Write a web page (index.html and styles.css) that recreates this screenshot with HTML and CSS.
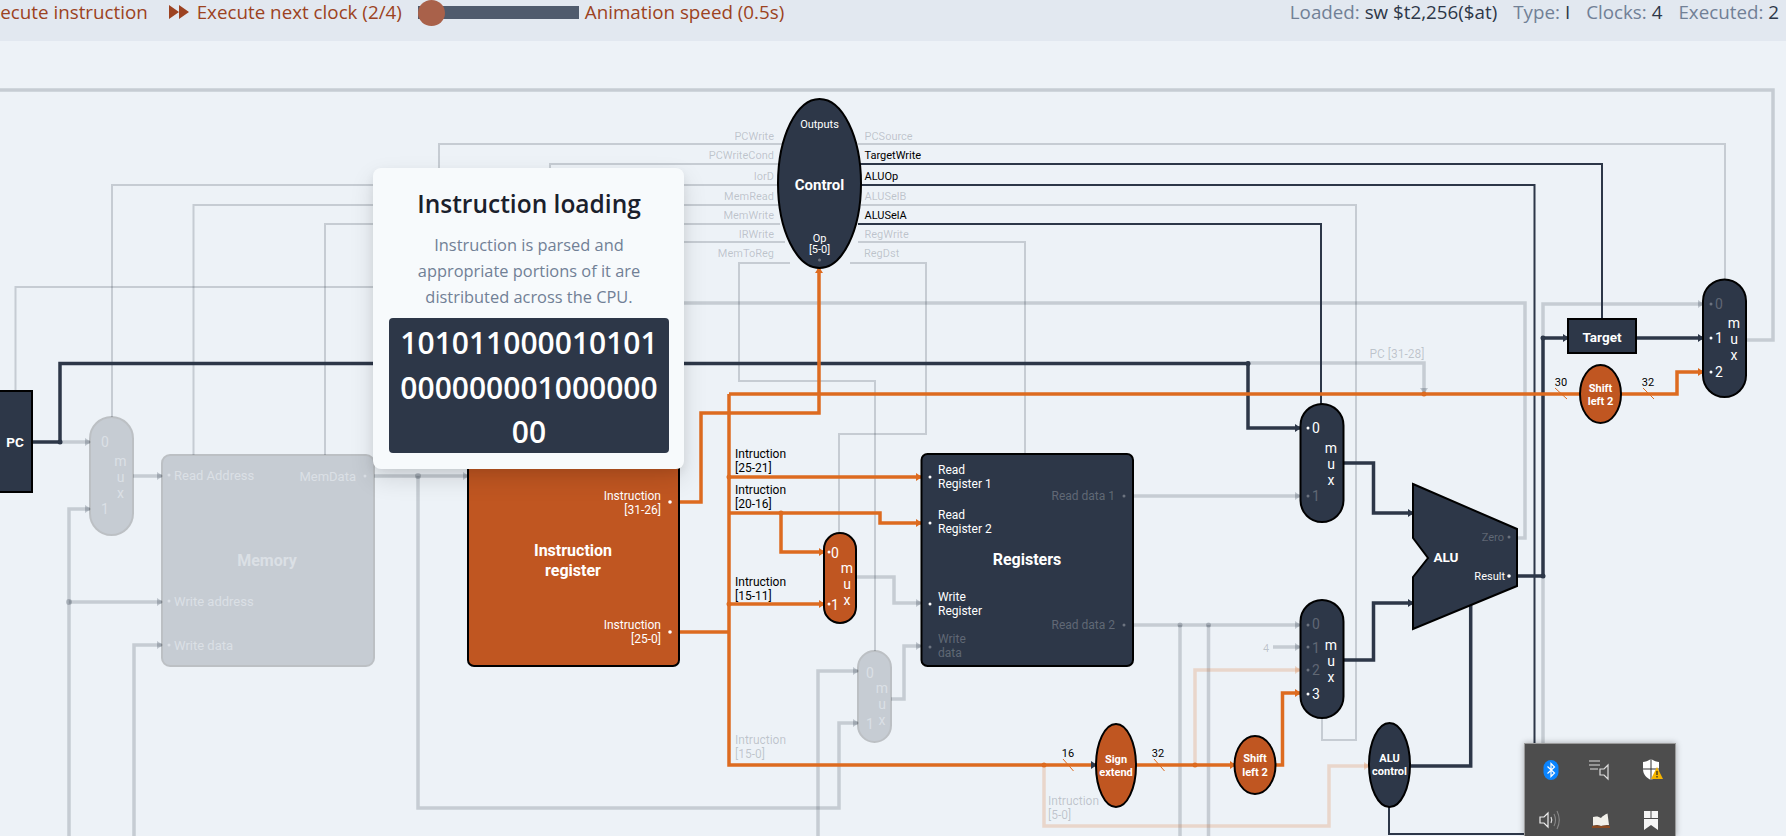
FILE: index.html
```html
<!DOCTYPE html>
<html lang="en">

<head>
    <meta charset="UTF-8">
    <title>MIPS CPU</title>
    <link rel="stylesheet" href="styles.css">
</head>

<body>
    <header class="topbar">
        <div class="controls">
            <span class="control-btn control-first">Execute instruction</span>
            <span class="control-btn">
                <svg class="ff-icon" width="20" height="14" viewBox="0 0 20 14"><path d="M0 0l10 7-10 7zM10 0l10 7-10 7z" /></svg>
                Execute next clock (2/4)
            </span>
            <span class="slider"><span class="slider-thumb"></span></span>
            <span class="control-btn speed">Animation speed (0.5s)</span>
        </div>
        <div class="stats">
            <span>Loaded: <b>sw $t2,256($at)</b></span>
            <span>Type: <b>I</b></span>
            <span>Clocks: <b>4</b></span>
            <span>Executed: <b>2</b></span>
        </div>
    </header>

    <main class="stage">
        <svg class="diagram" width="1786" height="795" viewBox="0 41 1786 795">
            <defs>
                <marker id="a-off" markerUnits="userSpaceOnUse" markerWidth="6" markerHeight="8" refX="5" refY="4" orient="auto"><path class="head-off" d="M0 0l6 4-6 4z" /></marker>
                <marker id="a-dark" markerUnits="userSpaceOnUse" markerWidth="6" markerHeight="8" refX="5" refY="4" orient="auto"><path class="head-dark" d="M0 0l6 4-6 4z" /></marker>
                <marker id="a-org" markerUnits="userSpaceOnUse" markerWidth="6" markerHeight="8" refX="5" refY="4" orient="auto"><path class="head-org" d="M0 0l6 4-6 4z" /></marker>
                <marker id="a-pale" markerUnits="userSpaceOnUse" markerWidth="6" markerHeight="8" refX="5" refY="4" orient="auto"><path class="head-pale" d="M0 0l6 4-6 4z" /></marker>
            </defs>

            <!-- inactive wires -->
            <g class="wire off">
                <path d="M0 90H1773V340H1746" />
                <path d="M69 836V509H90" marker-end="url(#a-off)" />
                <path d="M69 602H162" marker-end="url(#a-off)" />
                <path d="M134 836V645H162" marker-end="url(#a-off)" />
                <path d="M60 442H90" marker-end="url(#a-off)" />
                <path d="M133 476H162" marker-end="url(#a-off)" />
                <path d="M374 476H468" marker-end="url(#a-off)" />
                <path d="M418 476V808H839V723H858" marker-end="url(#a-off)" />
                <path d="M818 836V671H858" marker-end="url(#a-off)" />
                <path d="M856 577H894V603H921" marker-end="url(#a-off)" />
                <path d="M891 699H904V646H921" marker-end="url(#a-off)" />
                <path d="M1133 496H1300" marker-end="url(#a-off)" />
                <path d="M1133 625H1300" marker-end="url(#a-off)" />
                <path d="M1273 647H1300" marker-end="url(#a-off)" />
                <path d="M1180 625V836" />
                <path d="M1208.5 625V836" />
                <path d="M1248 363H1424V393" marker-end="url(#a-off)" />
                <path d="M1543 338V304H1703" marker-end="url(#a-off)" />
                <path d="M1543 576V836" />
                <path d="M500 303H1525V538H1517" />
                <path class="thin" d="M15.5 391V287H500" />
                <path class="thin" d="M785 144H439V170" />
                <path class="thin" d="M785 164H550V170" />
                <path class="thin" d="M782 185H112V417" />
                <path class="thin" d="M780 205H193.5V455" />
                <path class="thin" d="M780 224H325V455" />
                <path class="thin" d="M785 242H600" />
                <path class="thin" d="M790 263H739V381H875V651" />
                <path class="thin" d="M858 144H1725V279" />
                <path class="thin" d="M861 205H1356V740H1322V718" />
                <path class="thin" d="M858 242H1025V454" />
                <path class="thin" d="M850 263H926V434H839V533" />
            </g>

            <!-- faded orange wires -->
            <g class="wire pale">
                <path d="M1044 765V826H1329V766H1369" marker-end="url(#a-pale)" />
                <path d="M1195 765V670H1300" marker-end="url(#a-pale)" />
            </g>

            <!-- active control and data wires -->
            <g class="wire dark">
                <path d="M32 442H60V363.5H1248V428H1300" marker-end="url(#a-dark)" />
                <path d="M1344 463H1373.5V513H1413" marker-end="url(#a-dark)" />
                <path d="M1344 660H1373.5V603H1413" marker-end="url(#a-dark)" />
                <path d="M1517 576H1543V338H1568" marker-end="url(#a-dark)" />
                <path d="M1636 338H1703" marker-end="url(#a-dark)" />
                <path d="M1410 766H1470.7V604" />
                <path class="thin" d="M855 164H1602V319" />
                <path class="thin" d="M858 185H1534.5V836" />
                <path class="thin" d="M858 224H1321V404" />
                <path class="thin" d="M1389 807V834H1534" />
            </g>

            <g class="wire org">
                <path d="M680 502H701V413H819V268" marker-end="url(#a-org)" />
                <path d="M680 632H729" />
                <path d="M729 394V765H1096" marker-end="url(#a-dark)" />
                <path d="M729 394H1677V372H1703" marker-end="url(#a-org)" />
                <path d="M729 477H921" marker-end="url(#a-org)" />
                <path d="M729 513H880V523H921" marker-end="url(#a-org)" />
                <path d="M781 513V552H824" marker-end="url(#a-org)" />
                <path d="M729 604H824" marker-end="url(#a-org)" />
                <path d="M1136 765H1235" marker-end="url(#a-org)" />
                <path d="M1275 765H1282.5V693H1300" marker-end="url(#a-org)" />
            </g>

            <g class="slashes">
                <path d="M1063 759l10.5 12M1154 759l10.5 12M1555 388l12 11M1643 388l11 11" />
            </g>

            <g class="joints">
                <circle class="j-dark" cx="60" cy="442" r="2.5" />
                <circle class="j-dark" cx="1248" cy="363.5" r="2.5" />
                <circle class="j-dark" cx="1543" cy="338" r="2.5" />
                <circle class="j-dark" cx="1543" cy="576" r="2.5" />
                <circle class="j-org" cx="781" cy="513" r="2.5" />
                <circle class="j-org" cx="729" cy="477" r="2.5" />
                <circle class="j-org" cx="729" cy="604" r="2.5" />
                <circle class="j-org" cx="1195" cy="765" r="2.5" />
                <circle class="j-org" cx="1044" cy="765" r="2.5" />
                <circle class="j-org" cx="1424" cy="394" r="2.5" />
                <circle class="j-off" cx="418" cy="476" r="3" />
                <circle class="j-off" cx="69" cy="602" r="3" />
                <circle class="j-off" cx="1180" cy="625" r="2.5" />
                <circle class="j-off" cx="1208.5" cy="625" r="2.5" />
            </g>

            <!-- faded blocks -->
            <g class="faded">
                <rect class="block" x="162" y="455" width="212" height="211" rx="8" />
                <text class="lbl-w big" x="174" y="480">Read Address</text>
                <text class="lbl-w big end" x="356" y="481">MemData</text>
                <text class="lbl-w big" x="174" y="606">Write address</text>
                <text class="lbl-w big" x="174" y="650">Write data</text>
                <text class="title-w mid" x="267" y="566">Memory</text>
                <circle class="pin" cx="169" cy="475" r="1.5" />
                <circle class="pin" cx="169" cy="601" r="1.5" />
                <circle class="pin" cx="169" cy="645" r="1.5" />
                <circle class="pin" cx="365" cy="476" r="1.5" />
            </g>
            <g class="faded">
                <rect class="block" x="90" y="417" width="43" height="118" rx="21.5" />
                <text class="mux-t" x="101" y="447">0</text>
                <text class="mux-t" x="101" y="514">1</text>
                <text class="mux-t mid" x="120.5" y="466">m</text>
                <text class="mux-t mid" x="120.5" y="482">u</text>
                <text class="mux-t mid" x="120.5" y="498">x</text>
            </g>
            <g class="faded">
                <rect class="block" x="858" y="651" width="33" height="91" rx="16.5" />
                <text class="mux-t" x="866" y="678">0</text>
                <text class="mux-t" x="866" y="729">1</text>
                <text class="mux-t mid" x="882" y="693">m</text>
                <text class="mux-t mid" x="882" y="709">u</text>
                <text class="mux-t mid" x="882" y="725">x</text>
            </g>

            <!-- PC -->
            <rect class="block" x="-4" y="391" width="36" height="101" />
            <text class="title-s mid" x="15" y="447">PC</text>

            <!-- control unit -->
            <ellipse class="block" cx="819.5" cy="183.5" rx="41.5" ry="84.5" />
            <text class="lbl-w mid" x="819.5" y="128">Outputs</text>
            <text class="title-c mid" x="819.5" y="190">Control</text>
            <text class="lbl-w mid" x="819.5" y="242">Op</text>
            <text class="lbl-w mid" x="819.5" y="253">[5-0]</text>
            <circle class="pin dim" cx="819.5" cy="260" r="1.5" />
            <g class="lbl-off end">
                <text x="774" y="140">PCWrite</text>
                <text x="774" y="159">PCWriteCond</text>
                <text x="774" y="180">IorD</text>
                <text x="774" y="200">MemRead</text>
                <text x="774" y="219">MemWrite</text>
                <text x="774" y="238">IRWrite</text>
                <text x="774" y="257">MemToReg</text>
            </g>
            <g class="lbl-off">
                <text x="864.5" y="140">PCSource</text>
                <text x="864.5" y="200">ALUSelB</text>
                <text x="864.5" y="238">RegWrite</text>
                <text x="864" y="257">RegDst</text>
            </g>
            <g class="lbl-on">
                <text x="864.5" y="159">TargetWrite</text>
                <text x="864.5" y="180">ALUOp</text>
                <text x="864.5" y="219">ALUSelA</text>
            </g>

            <!-- instruction register -->
            <rect class="block hot" x="468" y="440" width="211" height="226" rx="6" />
            <text class="title-w mid" x="573" y="556">Instruction</text>
            <text class="title-w mid" x="573" y="576">register</text>
            <g class="lbl-w med end">
                <text x="661" y="500">Instruction</text>
                <text x="661" y="514">[31-26]</text>
                <text x="661" y="629">Instruction</text>
                <text x="661" y="643">[25-0]</text>
            </g>
            <circle class="pin" cx="670" cy="502" r="1.8" />
            <circle class="pin" cx="670" cy="632" r="1.8" />

            <g class="lbl-on med">
                <text x="735" y="458">Intruction</text>
                <text x="735" y="472">[25-21]</text>
                <text x="735" y="494">Intruction</text>
                <text x="735" y="508">[20-16]</text>
                <text x="735" y="586">Intruction</text>
                <text x="735" y="600">[15-11]</text>
            </g>
            <g class="lbl-off med">
                <text x="735" y="744">Intruction</text>
                <text x="735" y="758">[15-0]</text>
                <text x="1048" y="805">Intruction</text>
                <text x="1048" y="819">[5-0]</text>
                <text x="1397" y="358" text-anchor="middle">PC [31-28]</text>
            </g>

            <!-- reg dst mux -->
            <rect class="block hot" x="824" y="533" width="32" height="90" rx="16" />
            <text class="mux-w" x="831" y="558">0</text>
            <text class="mux-w" x="831" y="610">1</text>
            <text class="mux-w mid" x="847" y="573">m</text>
            <text class="mux-w mid" x="847" y="589">u</text>
            <text class="mux-w mid" x="847" y="605">x</text>
            <circle class="pin" cx="829" cy="552" r="1.5" />
            <circle class="pin" cx="829" cy="604" r="1.5" />

            <!-- registers -->
            <rect class="block" x="921.5" y="454" width="211.5" height="212" rx="6" />
            <text class="title-w mid" x="1027" y="565">Registers</text>
            <g class="lbl-w med">
                <text x="938" y="474">Read</text>
                <text x="938" y="488">Register 1</text>
                <text x="938" y="519">Read</text>
                <text x="938" y="533">Register 2</text>
                <text x="938" y="601">Write</text>
                <text x="938" y="615">Register</text>
            </g>
            <g class="lbl-dim med">
                <text x="938" y="643">Write</text>
                <text x="938" y="657">data</text>
                <text class="end" x="1115" y="500">Read data 1</text>
                <text class="end" x="1115" y="629">Read data 2</text>
            </g>
            <circle class="pin" cx="930" cy="477" r="1.5" />
            <circle class="pin" cx="930" cy="523" r="1.5" />
            <circle class="pin" cx="930" cy="604" r="1.5" />
            <circle class="pin dim" cx="930" cy="647" r="1.5" />
            <circle class="pin dim" cx="1124" cy="496" r="1.5" />
            <circle class="pin dim" cx="1124" cy="625" r="1.5" />

            <!-- A mux -->
            <rect class="block" x="1300.5" y="404" width="43" height="118" rx="21.5" />
            <text class="mux-w" x="1312" y="433">0</text>
            <text class="mux-dim" x="1312" y="501">1</text>
            <text class="mux-w mid" x="1331" y="453">m</text>
            <text class="mux-w mid" x="1331" y="469">u</text>
            <text class="mux-w mid" x="1331" y="485">x</text>
            <circle class="pin" cx="1308" cy="428" r="1.5" />
            <circle class="pin dim" cx="1308" cy="496" r="1.5" />

            <!-- B mux -->
            <rect class="block" x="1300.5" y="600" width="43" height="118" rx="21.5" />
            <text class="mux-dim" x="1312" y="629">0</text>
            <text class="mux-dim" x="1312" y="653">1</text>
            <text class="mux-dim" x="1312" y="675">2</text>
            <text class="mux-w" x="1312" y="699">3</text>
            <text class="mux-w mid" x="1331" y="650">m</text>
            <text class="mux-w mid" x="1331" y="666">u</text>
            <text class="mux-w mid" x="1331" y="682">x</text>
            <circle class="pin dim" cx="1308" cy="625" r="1.5" />
            <circle class="pin dim" cx="1308" cy="647" r="1.5" />
            <circle class="pin dim" cx="1308" cy="670" r="1.5" />
            <circle class="pin" cx="1308" cy="694" r="1.5" />
            <text class="lbl-off mid" x="1266" y="652">4</text>

            <!-- ALU -->
            <polygon class="block" points="1413,484 1517,529 1517,586 1413,629 1413,577 1428,558 1413,538" />
            <text class="title-s mid" x="1446" y="562">ALU</text>
            <text class="lbl-dim end" x="1504" y="541">Zero</text>
            <text class="lbl-w end" x="1505" y="580">Result</text>
            <circle class="pin dim" cx="1509" cy="537" r="1.5" />
            <circle class="pin" cx="1509" cy="576" r="1.8" />

            <!-- target + PC mux -->
            <rect class="block" x="1568" y="319" width="68" height="34" />
            <text class="title-s mid" x="1602" y="342">Target</text>
            <rect class="block" x="1703" y="279.5" width="43" height="117.5" rx="21.5" />
            <text class="mux-dim" x="1715" y="309">0</text>
            <text class="mux-w" x="1715" y="343">1</text>
            <text class="mux-w" x="1715" y="377">2</text>
            <text class="mux-w mid" x="1734" y="328">m</text>
            <text class="mux-w mid" x="1734" y="344">u</text>
            <text class="mux-w mid" x="1734" y="360">x</text>
            <circle class="pin dim" cx="1711" cy="304" r="1.5" />
            <circle class="pin" cx="1711" cy="338" r="1.5" />
            <circle class="pin" cx="1711" cy="372" r="1.5" />

            <!-- ovals -->
            <ellipse class="block hot" cx="1600.5" cy="394" rx="20.5" ry="29" />
            <text class="title-o mid" x="1600.5" y="392">Shift</text>
            <text class="title-o mid" x="1600.5" y="405">left 2</text>
            <text class="lbl-on mid" x="1561" y="386">30</text>
            <text class="lbl-on mid" x="1648" y="386">32</text>

            <ellipse class="block hot" cx="1116" cy="765.5" rx="20" ry="41.5" />
            <text class="title-o mid" x="1116" y="763">Sign</text>
            <text class="title-o mid" x="1116" y="776">extend</text>
            <text class="lbl-on mid" x="1068" y="757">16</text>
            <text class="lbl-on mid" x="1158" y="757">32</text>

            <ellipse class="block hot" cx="1255" cy="765" rx="20.5" ry="29" />
            <text class="title-o mid" x="1255" y="762">Shift</text>
            <text class="title-o mid" x="1255" y="776">left 2</text>

            <ellipse class="block" cx="1389.5" cy="765" rx="20.5" ry="42" />
            <text class="title-o mid" x="1389.5" y="762">ALU</text>
            <text class="title-o mid" x="1389.5" y="775">control</text>
        </svg>

        <section class="popup">
            <h2 class="popup-title">Instruction loading</h2>
            <p class="popup-text">Instruction is parsed and appropriate portions of it are distributed across the CPU.</p>
            <div class="popup-code">10101100001010100000000100000000</div>
        </section>

        <aside class="tray">
            <svg width="24" height="24" viewBox="0 0 24 24"><rect x="4.5" y="2" width="15" height="20" rx="7.5" fill="#0a84ff" /><path d="M8.500 8.500l7 6.500-3.500 3.500v-13l3.500 3.500-7 6.500" fill="none" stroke="#fff" stroke-width="1.2" /></svg>
            <svg width="24" height="24" viewBox="0 0 24 24"><path d="M0 3h11M0 7h11M1 11h8" stroke="#ddd" stroke-width="1.2" fill="none" /><path d="M11 11h4l4-4v14l-4-4h-4z" fill="none" stroke="#ddd" stroke-width="1.2" /></svg>
            <svg width="24" height="24" viewBox="0 0 24 24"><path d="M12 1c3 2 6 3 8 3v7c0 6-4 9-8 11-4-2-8-5-8-11V4c2 0 5-1 8-3z" fill="#fff" /><path d="M12 1v21M4 11h16" stroke="#333" stroke-width="1" /><path d="M18 9l6 12H12z" fill="#f5b400" /><path d="M18 13v4M18 18v1.5" stroke="#222" stroke-width="1.2" /></svg>
            <svg width="24" height="24" viewBox="0 0 24 24"><path d="M1 9h4l4-4v14l-4-4H1z" fill="none" stroke="#eee" stroke-width="1.2" /><path d="M12 9c1 2 1 4 0 6" fill="none" stroke="#ddd" stroke-width="1.2" /><path d="M15 6c2 4 2 8 0 12M18 3c3 6 3 12 0 18" fill="none" stroke="#888" stroke-width="1.1" /></svg>
            <svg width="24" height="24" viewBox="0 0 24 24"><path d="M3 18c3-1 6-1 9 0 3-1 6-1 9 0v2H3z" fill="#8a4a22" /><path d="M4 9c3-1 6-.5 8 1v8c-2-1-5-1.500-8-.5zM12 10c1.500-2 4-3.500 6.500-4.500L20 17c-3 0-6 0-8 1z" fill="#f2f0ea" /></svg>
            <svg width="24" height="24" viewBox="0 0 24 24"><path d="M5 3h6.500v7H5zM12.500 3H19v7h-6.500zM5 11h14v11l-7-5-7 5z" fill="#f5f5f5" /></svg>
        </aside>
    </main>
</body>

</html>
```

FILE: styles.css
```css
* {
    box-sizing: border-box;
}

html,
body {
    margin: 0;
    height: 100%;
    overflow: hidden;
}

body {
    background-color: #edf2f7;
    color: #2d3748;
    font-family: "Open Sans", "Liberation Sans", sans-serif;
}

.topbar {
    display: flex;
    justify-content: space-between;
    height: 41px;
    background-color: #e2e8f0;
    font-size: 18.8px;
    line-height: 25px;
    white-space: nowrap;
    overflow: hidden;
}

.controls {
    display: flex;
    align-items: flex-start;
    margin-left: -20px;
}

.control-btn {
    color: #9c4221;
}

.control-first {
    margin-right: 21px;
}

.ff-icon {
    fill: #9c4221;
    margin-right: 3px;
}

.slider {
    position: relative;
    flex: none;
    width: 161px;
    height: 13px;
    margin: 6px 6px 0 16px;
    background-color: #4f5b6d;
}

.slider-thumb {
    position: absolute;
    left: 0;
    top: -6px;
    width: 27px;
    height: 26px;
    border-radius: 50%;
    background-color: #a9614a;
}

.stats {
    display: flex;
    gap: 16px;
    padding-right: 7px;
    color: #718096;
}

.stats b {
    font-weight: 400;
    color: #2d3748;
}

.stage {
    position: relative;
    height: 795px;
    overflow: hidden;
}

.diagram {
    display: block;
}

.diagram text {
    font-family: Roboto, "Liberation Sans", sans-serif;
}

.wire {
    fill: none;
    stroke-width: 3.5;
}

.wire .thin {
    stroke-width: 2;
}

.off {
    stroke: #2d3748;
    stroke-opacity: 0.2;
}

.pale {
    stroke: #dd6b20;
    stroke-opacity: 0.2;
}

.dark {
    stroke: #2d3748;
}

.org {
    stroke: #dd6b20;
}

.head-off {
    fill: #2d3748;
    fill-opacity: 0.25;
    stroke: none;
}

.head-dark {
    fill: #2d3748;
    stroke: none;
}

.head-org {
    fill: #dd6b20;
    stroke: none;
}

.head-pale {
    fill: #dd6b20;
    fill-opacity: 0.25;
    stroke: none;
}

.slashes {
    fill: none;
    stroke: #dd6b20;
    stroke-width: 1;
}

.j-dark {
    fill: #2d3748;
}

.j-org {
    fill: #dd6b20;
}

.j-off {
    fill: #2d3748;
    fill-opacity: 0.25;
}

.block {
    fill: #2d3748;
    stroke: #000;
    stroke-width: 2;
}

.hot {
    fill: #c05621;
}

.faded {
    opacity: 0.2;
}

.mid {
    text-anchor: middle;
}

.end {
    text-anchor: end;
}

.lbl-w {
    fill: #fff;
    font-size: 11px;
}

.lbl-off {
    fill: #2d3748;
    fill-opacity: 0.25;
    font-size: 11px;
}

.lbl-on {
    fill: #000;
    font-size: 11px;
}

.lbl-dim {
    fill: #fff;
    fill-opacity: 0.25;
    font-size: 11px;
}

.med {
    font-size: 12px;
}

.big {
    font-size: 13px;
}

.title-w {
    fill: #fff;
    font-size: 16px;
    font-weight: 700;
}

.title-c {
    fill: #fff;
    font-size: 15px;
    font-weight: 700;
}

.title-s {
    fill: #fff;
    font-size: 13.5px;
    font-weight: 700;
}

.title-o {
    fill: #fff;
    font-size: 11px;
    font-weight: 700;
}

.mux-w,
.mux-t {
    fill: #fff;
    font-size: 14px;
}

.mux-dim {
    fill: #fff;
    fill-opacity: 0.25;
    font-size: 14px;
}

.pin {
    fill: #fff;
}

.pin.dim {
    fill-opacity: 0.3;
}

.faded text,
.faded .pin {
    fill-opacity: 0.5;
}

.popup {
    position: absolute;
    left: 373px;
    top: 127px;
    width: 311px;
    height: 301px;
    padding: 20px 15px 16px 16px;
    border-radius: 8px;
    background-color: #f7fafc;
    box-shadow: 0 10px 25px rgba(0, 0, 0, 0.12), 0 4px 10px rgba(0, 0, 0, 0.06);
    text-align: center;
}

.popup-title {
    margin: 0;
    color: #1a202c;
    font-size: 24.5px;
    font-weight: 600;
    line-height: 32px;
}

.popup-text {
    margin: 12px 0 8px;
    color: #718096;
    font-size: 16.4px;
    line-height: 26px;
}

.popup-code {
    height: 135px;
    padding: 3px 8px;
    border-radius: 4px;
    background-color: #2d3748;
    color: #fff;
    font-size: 30px;
    font-weight: 600;
    line-height: 44.5px;
    word-break: break-all;
}

.tray {
    position: absolute;
    right: 110px;
    bottom: 0;
    display: grid;
    grid-template-columns: repeat(3, 50px);
    grid-auto-rows: 50px;
    justify-items: center;
    align-items: center;
    width: 152px;
    height: 93px;
    padding: 1px;
    background-color: #4d4d4d;
    border: 1px solid #9a9a9a;
    border-bottom: 0;
    box-shadow: 0 0 6px rgba(0, 0, 0, 0.3);
}
```
